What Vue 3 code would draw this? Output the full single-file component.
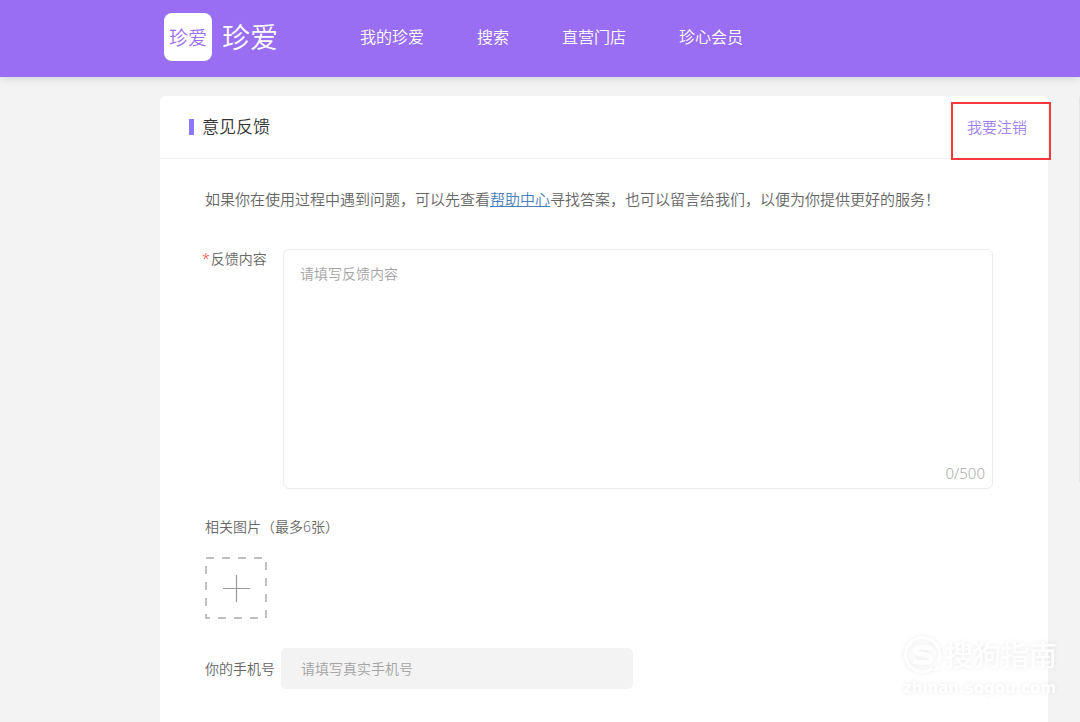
<script setup>
import { ref } from 'vue'

const navItems = ['我的珍爱', '搜索', '直营门店', '珍心会员']
const maxLength = 500
const content = ref('')
const phone = ref('')
</script>

<template>
  <div class="page">
    <header class="topbar">
      <a class="brand" href="#">
        <span class="brand-tile">珍爱</span>
        <span class="brand-name">珍爱</span>
      </a>
      <nav class="nav">
        <a v-for="item in navItems" :key="item" href="#">{{ item }}</a>
      </nav>
    </header>

    <main class="card">
      <div class="card-head">
        <h1>意见反馈</h1>
        <a class="cancel" href="#">我要注销</a>
      </div>

      <form class="form" @submit.prevent>
        <p class="intro">如果你在使用过程中遇到问题，可以先查看<a href="#">帮助中心</a>寻找答案，也可以留言给我们，以便为你提供更好的服务！</p>

        <div class="row">
          <label class="required" for="content"><span class="star">*</span>反馈内容</label>
          <div class="editor">
            <textarea id="content" v-model="content" :maxlength="maxLength" placeholder="请填写反馈内容"></textarea>
            <span class="count">{{ content.length }}/{{ maxLength }}</span>
          </div>
        </div>

        <p class="upload-label" id="upload-label">相关图片（最多6张）</p>
        <button class="upload" type="button" aria-labelledby="upload-label">
          <svg width="62" height="62" viewBox="0 0 62 62" fill="none">
            <rect x="1" y="1" width="60" height="60" stroke="#aaa" stroke-width="1.4" stroke-dasharray="8 8" />
            <path d="M18 31.5h27M31.5 18v27" stroke="#999" stroke-width="1.2" />
          </svg>
        </button>

        <div class="phone-row">
          <label for="phone">你的手机号</label>
          <input id="phone" v-model="phone" type="tel" placeholder="请填写真实手机号" />
        </div>
      </form>
    </main>

    <div class="scroll-edge"></div>

    <div class="watermark">
      <div class="watermark-top">
        <svg width="40" height="40" viewBox="0 0 40 40" fill="none">
          <path d="M29.500 33.500A17 17 0 1 1 35 27" stroke="#fff" stroke-width="3" />
          <path d="M31 36l5-5" stroke="#fff" stroke-width="3" />
          <path d="M29 14C24 11.500 12 11 12 15.500C12 20 28 18.500 28 24C28 29 16 28.500 10 26" stroke="#fff" stroke-width="5" />
        </svg>
        <span>搜狗指南</span>
      </div>
      <div class="watermark-url">zhinan.sogou.com</div>
    </div>
  </div>
</template>

<style>
body {
  margin: 0;
  background: #f3f3f3;
}
</style>

<style scoped>
.page {
  position: relative;
  display: flex;
  flex-direction: column;
  min-height: 100vh;
  overflow: hidden;
  box-sizing: border-box;
  font-family: "Noto Sans", "Noto Sans CJK SC", sans-serif;
  font-weight: 350;
  color: #666;
}
a {
  color: inherit;
  text-decoration: none;
}
.topbar {
  display: flex;
  align-items: center;
  height: 77px;
  padding: 0 0 4px 164px;
  box-sizing: border-box;
  background: #9a6ef2;
  box-shadow: 0 1px 8px rgba(0, 0, 0, 0.15);
  color: #fff;
}
.brand {
  display: flex;
  align-items: center;
  flex: 0 0 196px;
  gap: 10px;
}
.brand-tile {
  display: flex;
  align-items: center;
  justify-content: center;
  width: 48px;
  height: 48px;
  border-radius: 8px;
  background: #fff;
  color: #9a6ef2;
  font-size: 19px;
}
.brand-name {
  font-size: 28px;
  line-height: 48px;
}
.nav {
  display: flex;
  gap: 53px;
  font-size: 16px;
  line-height: 24px;
}
.card {
  flex: 1;
  margin: 19px 32px 0 160px;
  border-radius: 6px 6px 0 0;
  background: #fff;
}
.card-head {
  display: flex;
  align-items: center;
  justify-content: space-between;
  height: 63px;
  padding: 0 21px 0 29px;
  box-sizing: border-box;
  border-bottom: 1px solid #f0f0f0;
}
h1 {
  display: flex;
  align-items: center;
  gap: 8px;
  margin: 0;
  font-size: 17px;
  line-height: 24px;
  font-weight: 350;
  color: #333;
}
h1::before {
  content: "";
  width: 5px;
  height: 16px;
  background: #8c78ff;
}
.cancel {
  position: relative;
  color: #a281f5;
  font-size: 15px;
  line-height: 24px;
}
.cancel::after {
  content: "";
  position: absolute;
  inset: -13px -24px -21px -16px;
  border: 2px solid #f53a3a;
}
.form {
  padding: 28px 55px 32px 45px;
  font-size: 14px;
  line-height: 24px;
}
.intro {
  margin: 0 0 38px;
  font-size: 15px;
}
.intro a {
  color: #4a7ebb;
  text-decoration: underline;
}
.row {
  display: flex;
  align-items: flex-start;
}
.required {
  flex: 0 0 78px;
  display: flex;
  gap: 1px;
  margin-left: -3px;
  line-height: 20px;
}
.star {
  color: #f44;
}
.editor {
  position: relative;
  flex: 1;
  margin-left: 3px;
}
textarea {
  display: block;
  width: 100%;
  height: 240px;
  padding: 12px 16px;
  box-sizing: border-box;
  border: 1px solid #ececec;
  border-radius: 6px;
  outline: none;
  resize: none;
  background: #fff;
  color: #666;
  font: inherit;
}
.count {
  position: absolute;
  right: 8px;
  bottom: 4px;
  font-size: 15px;
  color: #aaa;
}
::placeholder {
  color: #a4a4a4;
  opacity: 1;
}
.upload-label {
  margin: 26px 0 18px;
}
.upload {
  display: block;
  padding: 0;
  border: 0;
  background: none;
}
.upload svg {
  display: block;
}
.phone-row {
  display: flex;
  align-items: center;
  margin-top: 29px;
}
.phone-row label {
  flex: 0 0 76px;
}
input {
  width: 352px;
  height: 41px;
  padding: 0 20px;
  box-sizing: border-box;
  border: 0;
  border-radius: 5px;
  outline: none;
  background: #f3f3f3;
  color: #666;
  font: inherit;
}
.scroll-edge {
  position: absolute;
  top: 97px;
  right: 0;
  width: 1px;
  height: 385px;
  background: #e6e6e6;
}
.watermark {
  position: absolute;
  right: 23px;
  bottom: 22px;
  color: #fff;
  filter: drop-shadow(0 0 2px rgba(0, 0, 0, 0.08));
}
.watermark-top {
  display: flex;
  align-items: center;
  gap: 2px;
  font-size: 28px;
  line-height: 42px;
  font-weight: 500;
}
.watermark-url {
  font-family: "DejaVu Sans", sans-serif;
  font-size: 15px;
  line-height: 24px;
  font-weight: 700;
}
</style>
